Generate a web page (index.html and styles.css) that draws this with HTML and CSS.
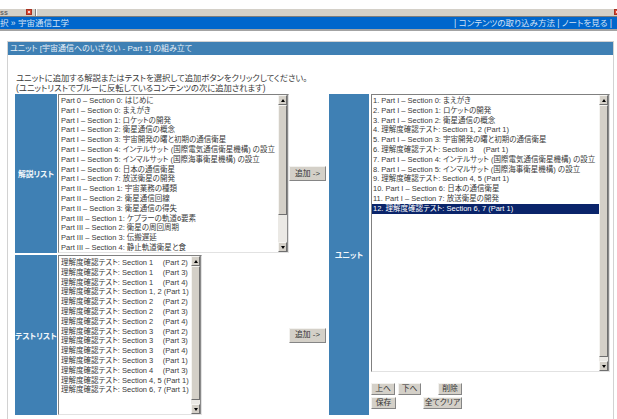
FILE: index.html
```html
<!DOCTYPE html>
<html lang="ja">
<head>
<meta charset="utf-8">
<title>ユニットの組み立て</title>
<link rel="stylesheet" href="styles.css">
</head>
<body>
<div class="tabstrip">
  <span class="tab-title">ss</span>
  <span class="tab-close"></span>
  <span class="tab-sep"></span>
  <span class="tab-close tab-close-far"></span>
</div>
<nav class="crumbs">
  <span class="crumb-path">択 » 宇宙通信工学</span>
  <span class="crumb-links">| コンテンツの取り込み方法 | ノートを見る |</span>
</nav>
<section class="panel">
  <h1 class="panel-head">ユニット [宇宙通信へのいざない - Part 1] の組み立て</h1>
  <div class="panel-body">
    <p class="hint">ユニットに追加する解説またはテストを選択して追加ボタンをクリックしてください。<br>(ユニットリストでブルーに反転しているコンテンツの次に追加されます)</p>
    <div class="builder">
      <div class="label lbl-notes">解説リスト</div>
      <div class="listbox lb-notes">
        <div class="items">
          <div class="item">Part 0 – Section 0: はじめに</div>
          <div class="item">Part I – Section 0: まえがき</div>
          <div class="item">Part I – Section 1: ロケットの開発</div>
          <div class="item">Part I – Section 2: 衛星通信の概念</div>
          <div class="item">Part I – Section 3: 宇宙開発の曙と初期の通信衛星</div>
          <div class="item">Part I – Section 4: インテルサット (国際電気通信衛星機構) の設立</div>
          <div class="item">Part I – Section 5: インマルサット (国際海事衛星機構) の設立</div>
          <div class="item">Part I – Section 6: 日本の通信衛星</div>
          <div class="item">Part I – Section 7: 放送衛星の開発</div>
          <div class="item">Part II – Section 1: 宇宙業務の種類</div>
          <div class="item">Part II – Section 2: 衛星通信回線</div>
          <div class="item">Part II – Section 3: 衛星通信の得失</div>
          <div class="item">Part III – Section 1: ケプラーの軌道6要素</div>
          <div class="item">Part III – Section 2: 衛星の周回周期</div>
          <div class="item">Part III – Section 3: 伝搬遅延</div>
          <div class="item">Part III – Section 4: 静止軌道衛星と食</div>
        </div>
        <div class="sb">
          <span class="sb-btn sb-up"></span>
          <span class="sb-track"><span class="sb-thumb"></span></span>
          <span class="sb-btn sb-down"></span>
        </div>
      </div>
      <div class="add-cell"><button class="btn btn-add">追加 -&gt;</button></div>
      <div class="label lbl-unit">ユニット</div>
      <div class="unit-col">
        <div class="listbox lb-unit">
          <div class="items">
            <div class="item">1. Part I – Section 0: まえがき</div>
            <div class="item">2. Part I – Section 1: ロケットの開発</div>
            <div class="item">3. Part I – Section 2: 衛星通信の概念</div>
            <div class="item">4. 理解度確認テスト: Section 1, 2 (Part 1)</div>
            <div class="item">5. Part I – Section 3: 宇宙開発の曙と初期の通信衛星</div>
            <div class="item">6. 理解度確認テスト: Section 3 　(Part 1)</div>
            <div class="item">7. Part I – Section 4: インテルサット (国際電気通信衛星機構) の設立</div>
            <div class="item">8. Part I – Section 5: インマルサット (国際海事衛星機構) の設立</div>
            <div class="item">9. 理解度確認テスト: Section 4, 5 (Part 1)</div>
            <div class="item">10. Part I – Section 6: 日本の通信衛星</div>
            <div class="item">11. Part I – Section 7: 放送衛星の開発</div>
            <div class="item sel">12. 理解度確認テスト: Section 6, 7 (Part 1)</div>
          </div>
          <div class="sb">
            <span class="sb-btn sb-up"></span>
            <span class="sb-track"><span class="sb-thumb"></span></span>
            <span class="sb-btn sb-down"></span>
          </div>
        </div>
        <div class="unit-actions">
          <div class="act-row">
            <button class="btn btn-sm">上へ</button>
            <button class="btn btn-sm btn-down">下へ</button>
            <button class="btn btn-sm push">削除</button>
          </div>
          <div class="act-row">
            <button class="btn btn-sm btn-save">保存</button>
            <button class="btn btn-sm btn-clear push">全てクリア</button>
          </div>
        </div>
      </div>
      <div class="label lbl-tests">テストリスト</div>
      <div class="listbox lb-tests">
        <div class="items">
          <div class="item">理解度確認テスト: Section 1 　(Part 2)</div>
          <div class="item">理解度確認テスト: Section 1 　(Part 3)</div>
          <div class="item">理解度確認テスト: Section 1 　(Part 4)</div>
          <div class="item">理解度確認テスト: Section 1, 2 (Part 1)</div>
          <div class="item">理解度確認テスト: Section 2 　(Part 2)</div>
          <div class="item">理解度確認テスト: Section 2 　(Part 3)</div>
          <div class="item">理解度確認テスト: Section 2 　(Part 4)</div>
          <div class="item">理解度確認テスト: Section 3 　(Part 2)</div>
          <div class="item">理解度確認テスト: Section 3 　(Part 3)</div>
          <div class="item">理解度確認テスト: Section 3 　(Part 4)</div>
          <div class="item">理解度確認テスト: Section 3 　(Part 1)</div>
          <div class="item">理解度確認テスト: Section 4 　(Part 3)</div>
          <div class="item">理解度確認テスト: Section 4, 5 (Part 1)</div>
          <div class="item">理解度確認テスト: Section 6, 7 (Part 1)</div>
        </div>
        <div class="sb">
          <span class="sb-btn sb-up"></span>
          <span class="sb-track"><span class="sb-thumb"></span></span>
          <span class="sb-btn sb-down"></span>
        </div>
      </div>
      <div class="add-cell"><button class="btn btn-add">追加 -&gt;</button></div>
    </div>
  </div>
</section>
</body>
</html>
```

FILE: styles.css
```css
* { box-sizing: border-box; }

body {
  margin: 0;
  background: #fff;
  color: #222;
  font-family: "Liberation Sans", "Noto Sans CJK JP", sans-serif;
  font-feature-settings: "palt";
}

/* window tab strip */
.tabstrip {
  margin-top: 9px;
  height: 8px;
  background: #d4d0c8;
  border-bottom: 1px solid #7d7d7d;
  display: flex;
  align-items: flex-start;
  overflow: hidden;
}
.tab-title {
  width: 26px;
  font-size: 7px;
  line-height: 7px;
  font-weight: bold;
  color: #666;
}
.tab-close {
  width: 6px;
  height: 6px;
  background: radial-gradient(circle, #f7d6cf 0 1px, #dc4a36 1.5px);
  border: 1px solid #a8321f;
}
.tab-sep {
  width: 1px;
  height: 7px;
  margin-left: 3px;
  background: #808080;
  box-shadow: 1px 0 #fff;
}
.tab-close-far {
  margin-left: auto;
  margin-right: -3px;
}

/* breadcrumb bar */
.crumbs {
  height: 14px;
  background: #0066cc;
  border-bottom: 2px solid #a3a3a3;
  display: flex;
  justify-content: space-between;
  align-items: center;
  padding: 0 5px 0 0;
  font-size: 8.5px;
  line-height: 12px;
  color: #d4e3f6;
  white-space: nowrap;
}

/* unit builder panel */
.panel {
  margin: 10px 0 0 7px;
  width: 607px;
  height: 380px;
  border: 1px solid #d2d2d2;
  border-bottom: none;
}
.panel-head {
  margin: 0;
  height: 13px;
  padding-left: 2px;
  background: #3f80b4;
  color: #e9f0f7;
  font-size: 8px;
  font-weight: normal;
  line-height: 13px;
  white-space: nowrap;
}
.panel-body {
  padding: 18px 0 0 7px;
}
.hint {
  margin: 0 0 1px;
  padding-left: 1px;
  font-size: 8.3px;
  line-height: 10px;
  color: #3a3a3a;
  white-space: nowrap;
}

.builder {
  display: grid;
  grid-template-columns: 42px 231px 38px 40px 240px;
  grid-template-rows: 159px 160px;
  gap: 2px 1px;
}
.label {
  background: #3f80b4;
  color: #f4f8fb;
  font-size: 7.8px;
  font-weight: bold;
  display: flex;
  align-items: center;
  justify-content: center;
  white-space: nowrap;
}
.lbl-unit {
  grid-column: 4;
  grid-row: 1 / span 2;
}
.unit-col {
  grid-column: 5;
  grid-row: 1 / span 2;
  padding-left: 1px;
}
.add-cell {
  display: flex;
  align-items: center;
}

/* list boxes */
.listbox {
  display: flex;
  background: #fff;
  border: 1px solid;
  border-color: #808080 #e2e2e2 #e2e2e2 #808080;
}
.lb-notes { width: 231px; height: 159px; }
.lb-tests { width: 144px; height: 160px; }
.lb-unit { width: 239px; height: 278px; }

.items {
  flex: 1;
  min-width: 0;
  overflow: hidden;
  padding: 1px 0 0 2px;
}
.lb-unit .items { padding: 1px 0 0 0; }
.lb-tests .items { padding-top: 2px; }
.item {
  height: 9.8px;
  font-size: 7.5px;
  line-height: 9.8px;
  white-space: nowrap;
  color: #3a3a3a;
}
.lb-unit .item { padding-left: 1px; }
.item.sel {
  background: #0a246a;
  color: #fff;
}

/* classic scroll bar */
.sb {
  width: 10px;
  display: flex;
  flex-direction: column;
  background: #ebe9e5;
  border-right: 1px solid #8a8a8a;
}
.sb-btn,
.sb-thumb {
  display: block;
  background: #d4d0c8;
  border: 1px solid;
  border-color: #f5f4f1 #6f6f6f #6f6f6f #f5f4f1;
}
.sb-btn {
  height: 10px;
  position: relative;
}
.sb-btn::after {
  content: "";
  position: absolute;
  left: 2px;
  top: 3px;
  border-left: 2.5px solid transparent;
  border-right: 2.5px solid transparent;
}
.sb-up::after { border-bottom: 3px solid #000; }
.sb-down::after { border-top: 3px solid #000; }
.sb-track {
  flex: 1;
  display: block;
}
.lb-notes .sb-thumb { height: 110px; }
.lb-tests .sb-thumb { height: 134px; }
.lb-unit .sb-thumb { height: 252px; }

/* buttons */
.btn {
  font-family: inherit;
  font-feature-settings: "palt";
  font-size: 7.8px;
  color: #333;
  background: #d4d0c8;
  border: 1px solid;
  border-color: #f3f2ef #858585 #858585 #f3f2ef;
  padding: 0;
  white-space: nowrap;
}
.btn-add {
  width: 37px;
  height: 15px;
  line-height: 12px;
  margin-left: -1px;
}
.unit-actions {
  margin-top: 11px;
  width: 91px;
  display: flex;
  flex-direction: column;
  gap: 2px;
}
.act-row {
  display: flex;
}
.btn-sm {
  width: 24px;
  height: 12px;
  line-height: 10px;
}
.btn-down { margin-left: 3px; width: 23px; }
.btn-save { width: 25px; }
.btn-clear { width: 39px; }
.push { margin-left: auto; }
```
